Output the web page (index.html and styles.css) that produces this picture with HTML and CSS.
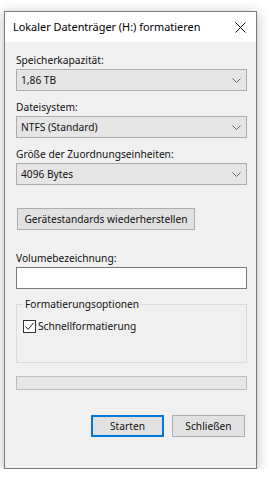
FILE: index.html
```html
<!DOCTYPE html>
<html lang="de">
<head>
<meta charset="utf-8">
<link rel="stylesheet" href="styles.css">
</head>
<body>
<div class="window">
  <div class="titlebar">
    <span class="title">Lokaler Datenträger (H:) formatieren</span>
    <svg class="close" width="11" height="11" viewBox="0 0 11 11"><path d="M0.5 0.5L10.5 10.5M10.5 0.5L0.5 10.5" stroke="#111" stroke-width="1" fill="none"/></svg>
  </div>
  <div class="content">
    <div class="label l1">Speicherkapazität:</div>
    <div class="combo"><span>1,86 TB</span><svg width="9" height="5" viewBox="0 0 9 5"><path d="M0.5 0.5L4.5 4.5L8.5 0.5" stroke="#666" fill="none"/></svg></div>
    <div class="label">Dateisystem:</div>
    <div class="combo"><span>NTFS (Standard)</span><svg width="9" height="5" viewBox="0 0 9 5"><path d="M0.5 0.5L4.5 4.5L8.5 0.5" stroke="#666" fill="none"/></svg></div>
    <div class="label">Größe der Zuordnungseinheiten:</div>
    <div class="combo"><span>4096 Bytes</span><svg width="9" height="5" viewBox="0 0 9 5"><path d="M0.5 0.5L4.5 4.5L8.5 0.5" stroke="#666" fill="none"/></svg></div>
    <div class="btn restore">Gerätestandards wiederherstellen</div>
    <div class="label l4">Volumebezeichnung:</div>
    <div class="input"></div>
    <div class="group">
      <div class="legend">Formatierungsoptionen</div>
      <div class="check">
        <span class="box"><svg width="11" height="11" viewBox="0 0 11 11"><path d="M1.5 5.5L4.2 8.3L9.6 1.8" stroke="#222" stroke-width="1" fill="none"/></svg></span>
        <span>Schnellformatierung</span>
      </div>
    </div>
    <div class="progress"></div>
    <div class="actions">
      <div class="btn primary">Starten</div>
      <div class="btn">Schließen</div>
    </div>
  </div>
</div>
</body>
</html>
```
FILE: styles.css
```css
* { box-sizing: border-box; }
html, body { margin: 0; padding: 0; background: #fff; }
body {
  font-family: "Segoe UI", "Noto Sans", "Open Sans", sans-serif;
  font-size: 10.2px;
  color: #111;
}
.window {
  margin: 11px 0 0 4px;
  width: 253px;
  height: 458px;
  border: 1px solid #7a7a7a;
  background: #f0f0f0;
  box-shadow: 0 2px 12px rgba(0,0,0,0.28);
  display: flex;
  flex-direction: column;
}
.titlebar {
  height: 30px;
  background: #fff;
  display: flex;
  align-items: center;
  justify-content: space-between;
  padding: 0 10px 0 8px;
}
.title { font-size: 10.9px; line-height: 16px; color: #000; }
.close { display: block; }
.content {
  padding: 0 9px 0 11px;
  display: flex;
  flex-direction: column;
}
.label { line-height: 16px; margin-top: 8px; margin-bottom: 1px; }
.l1 { margin-top: 10px; }
.combo {
  height: 22px;
  background: #e5e5e5;
  border: 1px solid #acacac;
  display: flex;
  align-items: center;
  justify-content: space-between;
  padding: 0 5px 0 4px;
}
.combo svg { display: block; }
.btn {
  height: 22px;
  background: #e1e1e1;
  border: 1px solid #adadad;
  display: flex;
  align-items: center;
  justify-content: center;
}
.restore { width: 178px; margin-top: 23px; margin-left: 1px; }
.l4 { margin-top: 20px; }
.input { height: 22px; background: #fff; border: 1px solid #7a7a7a; }
.group {
  margin-top: 15px;
  height: 59px;
  border: 1px solid #dcdcdc;
  position: relative;
  padding: 13px 0 0 6px;
}
.legend {
  position: absolute;
  top: -9px;
  left: 6px;
  padding: 0 2px;
  background: #f0f0f0;
  line-height: 16px;
}
.check { display: flex; align-items: center; gap: 2px; line-height: 16px; }
.box {
  width: 13px; height: 13px;
  border: 1px solid #333;
  background: #fff;
  display: flex; align-items: center; justify-content: center;
}
.box svg { display: block; }
.progress {
  margin-top: 13px;
  height: 14px;
  background: #e6e6e6;
  border: 1px solid #bcbcbc;
}
.actions {
  margin-top: 25px;
  display: flex;
  justify-content: flex-end;
  gap: 8px;
  padding-right: 2px;
}
.actions .btn { width: 73px; }
.primary { border: 2px solid #0078d7; }
```
